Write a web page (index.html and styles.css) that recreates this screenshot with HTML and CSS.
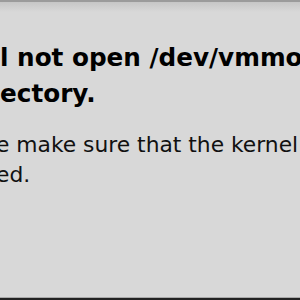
FILE: index.html
```html
<!DOCTYPE html>
<html>
<head>
<meta charset="utf-8">
<link rel="stylesheet" href="styles.css">
</head>
<body>
<div class="window">
  <div class="top-rule"></div>
  <div class="top-shade"></div>
  <div class="content">
    <p class="title"><span class="line">l not open /dev/vmmon: No such file or</span><span class="line">ectory.</span></p>
    <p class="message"><span class="line shift">e make sure that the kernel module</span><span class="line shift">ed.</span></p>
  </div>
  <div class="bottom-rule"></div>
  <div class="bottom-dark"></div>
</div>
</body>
</html>
```

FILE: styles.css
```css
html, body {
  margin: 0;
  padding: 0;
  width: 300px;
  height: 300px;
  overflow: hidden;
}
.window {
  width: 300px;
  height: 300px;
  display: flex;
  flex-direction: column;
  background: #d8d8d8;
  overflow: hidden;
  font-family: "DejaVu Sans", "Liberation Sans", sans-serif;
  color: #000;
}
.top-rule {
  height: 2px;
  background: #9b9b9b;
  flex: none;
}
.top-shade {
  height: 10px;
  flex: none;
  background: linear-gradient(#c6c6c6, #d8d8d8);
}
.content {
  flex: 1;
  padding-top: 28px;
  overflow: hidden;
}
.title {
  margin: 0;
  font-weight: bold;
  font-size: 24.7px;
  line-height: 36px;
  white-space: nowrap;
}
.message {
  margin: 18px 0 0;
  font-size: 21.8px;
  line-height: 30px;
  white-space: nowrap;
  color: #111;
}
.line {
  display: block;
}
.shift {
  margin-left: -4px;
}
.bottom-rule {
  height: 1px;
  flex: none;
  background: #a9a9a9;
}
.bottom-dark {
  height: 2px;
  flex: none;
  background: #222;
}
```
